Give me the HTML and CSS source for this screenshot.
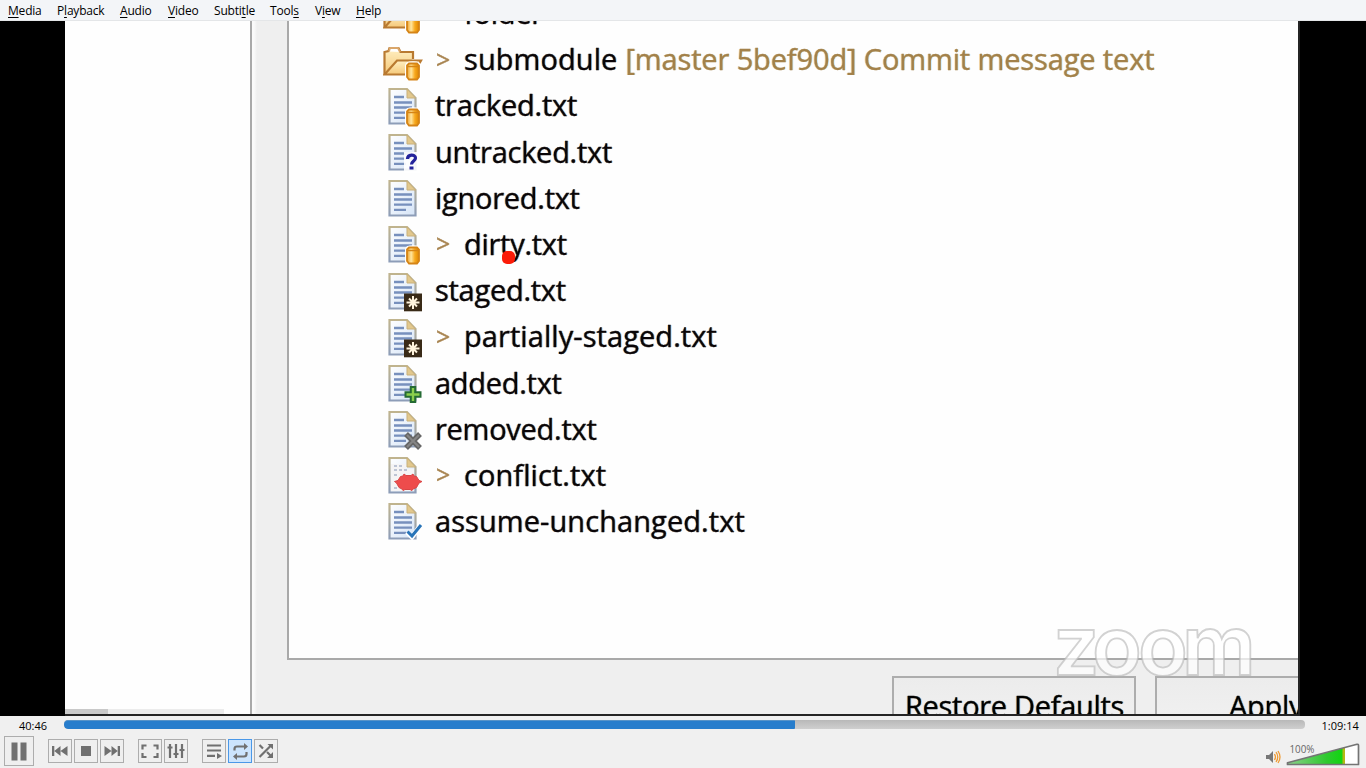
FILE: index.html
```html
<!DOCTYPE html>
<html lang="en">
<head>
<meta charset="utf-8">
<title>Media player</title>
<link rel="stylesheet" href="styles.css">
</head>
<body>
<svg class="defs" width="0" height="0">
  <defs>
    <linearGradient id="paper" x1="0" y1="0" x2="1" y2="1"><stop offset="0" stop-color="#fff"/><stop offset="1" stop-color="#d5e4f7"/></linearGradient>
    <linearGradient id="edge" x1="0" y1="0" x2="0" y2="1"><stop offset="0" stop-color="#c0b48e"/><stop offset="1" stop-color="#8d9db8"/></linearGradient>
    <linearGradient id="gold"><stop offset="0" stop-color="#eda02c"/><stop offset=".35" stop-color="#ffe6a0"/><stop offset=".65" stop-color="#f8aa20"/><stop offset="1" stop-color="#dc8500"/></linearGradient>
    <linearGradient id="fold" x1="0" y1="0" x2="0" y2="1"><stop offset="0" stop-color="#fff0c4"/><stop offset="1" stop-color="#f5c878"/></linearGradient>
    <linearGradient id="vol"><stop offset="0" stop-color="#8bcf8b"/><stop offset=".55" stop-color="#2fc92f"/><stop offset=".76" stop-color="#12d412"/><stop offset=".79" stop-color="#b5b814"/><stop offset=".81" stop-color="#b5b814"/><stop offset=".81" stop-color="#fff"/></linearGradient>
    <g id="doc">
      <path d="M6.5 6H24l8.500 9v25.500H6.500z" fill="url(#paper)" stroke="url(#edge)" stroke-width="2.200"/>
      <path d="M24 6v9h8.500z" fill="#e2c88d" stroke="#c9b07a"/>
      <path d="M11 14h10M11 19.500h18M11 24.500h18M11 29.700h18M11 34.800h12" stroke="#7790bd" stroke-width="2.300"/>
    </g>
    <g id="cyl">
      <path d="M24 28.500c0-3 12-3 12 0V40.500c0 3-12 3-12 0z" fill="#fff" stroke="#fff" stroke-width="4"/>
      <path d="M24 28.500l2-2h8l2 2v11.500l-2 2.500h-8l-2-2.500z" fill="url(#gold)" stroke="#d58416" stroke-width="1.800"/>
      <path d="M24.500 29.500h11" fill="none" stroke="#d58416" stroke-width="1.500"/>
    </g>
    <g id="folder">
      <path d="M1.500 37V15l4-1 1-3h9l2 4H30v7" fill="url(#fold)" stroke="#b97a31" stroke-width="2.200"/>
      <path d="M6 14.500l1-3.500h8l2 4" fill="#fff" stroke="#d9a66b" stroke-width="1.800"/>
      <path d="M1.500 37.500L14 23.500h24L30 37.500z" fill="url(#fold)" stroke="#b97a31" stroke-width="2.200"/>
    </g>
    <g id="star">
      <path d="M21 25.500h18v17.800H21z" fill="#392a17"/>
      <path d="M30 28v13M23.500 34.500h13M26 30.500l8 8M34 30.500l-8 8" stroke="#fff4dd" stroke-width="2"/>
    </g>
  </defs>
</svg>

<nav class="menubar">
  <span class="m1"><u>M</u>edia</span><span class="m2">P<u>l</u>ayback</span><span class="m3"><u>A</u>udio</span><span class="m4"><u>V</u>ideo</span><span class="m5">Subti<u>t</u>le</span><span class="m6">Tool<u>s</u></span><span class="m7">V<u>i</u>ew</span><span class="m8"><u>H</u>elp</span>
</nav>

<main class="stage">
  <div class="video">
    <aside class="side"><div class="hscroll"><i></i></div></aside>
    <section class="dialog">
      <div class="tree">
        <div class="row"><svg class="ic"><use href="#folder"/><use href="#cyl"/></svg><span class="t l2 folder">folder</span></div>
        <div class="row"><svg class="ic"><use href="#folder"/><use href="#cyl"/></svg><span class="gt">&gt;</span><span class="t l2 wide">submodule</span><span class="t deco">[master 5bef90d] Commit message text</span></div>
        <div class="row"><svg class="ic"><use href="#doc"/><use href="#cyl"/></svg><span class="t">tracked.txt</span></div>
        <div class="row"><svg class="ic"><use href="#doc"/><path d="M21 23h16v21H21z" fill="#fff" opacity=".9"/><path d="M24.500 30c0-5 8-5 8-1 0 3-4 3-4 6.500M26.500 39h4" fill="none" stroke="#23239b" stroke-width="3.200"/></svg><span class="t">untracked.txt</span></div>
        <div class="row"><svg class="ic"><use href="#doc"/></svg><span class="t">ignored.txt</span></div>
        <div class="row"><svg class="ic"><use href="#doc"/><use href="#cyl"/></svg><span class="gt">&gt;</span><span class="t l2">dirty.txt</span><i class="pointer"></i></div>
        <div class="row"><svg class="ic"><use href="#doc"/><use href="#star"/></svg><span class="t">staged.txt</span></div>
        <div class="row"><svg class="ic"><use href="#doc"/><use href="#star"/></svg><span class="gt">&gt;</span><span class="t l2 wide">partially-staged.txt</span></div>
        <div class="row"><svg class="ic"><use href="#doc"/><path d="M30 26v17M21.500 34.500h17" stroke="#256b34" stroke-width="6.500"/><path d="M30 28v13M23.500 34.500h13" stroke="#8bd04d" stroke-width="2.400"/></svg><span class="t">added.txt</span></div>
        <div class="row"><svg class="ic"><use href="#doc"/><path d="M23 28l14 14M37 28L23 42" stroke="#666" stroke-width="5.500"/><path d="M24 29l12 12M36 29L24 41" stroke="#858585" stroke-width="2"/></svg><span class="t">removed.txt</span></div>
        <div class="row"><svg class="ic"><use href="#doc"/><path d="M8 12h15v5h8v22H8z" fill="#f5f4f5"/><path d="M11 14h10M11 18h14M11 23h4M11 36h5" stroke="#aab4c9" stroke-width="1.700" stroke-dasharray="3 2"/><path d="M11.500 29.500l3.500-1 2.500-4 2.500-.5 1-2 2 1.500h5l2-1.500 1 2 2.500.5 2.500 4 3 1-3 1.500-2.500 4.500-3.500 1.500-1 1.500-2-1h-5l-2 1-1-1.500-3-1.500-2.500-4.500z" fill="#ee4c4c" stroke="#d94444"/></svg><span class="gt">&gt;</span><span class="t l2 wide">conflict.txt</span></div>
        <div class="row"><svg class="ic"><use href="#doc"/><path d="M24 34l5 5 9-12" fill="none" stroke="#fff" stroke-width="5"/><path d="M24.500 33.500l4.500 4.500L38 27" fill="none" stroke="#2874b8" stroke-width="3"/></svg><span class="t wide">assume-unchanged.txt</span></div>
      </div>
      <div class="buttons"><div class="btn b1"><span>Restore Defaults</span></div><div class="btn b2"><span>Apply</span></div></div>
    </section>
    <svg class="mark" width="210" height="64"><text x="4 43 89 133" y="54">zoom</text></svg>
  </div>
</main>

<footer class="controls">
  <div class="seek"><span class="now">40:46</span><div class="bar"><i></i></div><span class="total">1:09:14</span></div>
  <div class="tools">
    <div class="cb big"><svg width="28" height="28"><path d="M6.500 5.500h6v18h-6zM15.500 5.500h6v18h-6z"/></svg></div>
    <div class="group">
      <div class="cb"><svg width="22" height="22"><path d="M3 6h2.300v10H3zM11.500 6v10L5.300 11zM18.500 6v10L11.500 11z"/></svg></div>
      <div class="cb"><svg width="22" height="22"><path d="M6 6h10v10H6z"/></svg></div>
      <div class="cb"><svg width="22" height="22"><path d="M16.700 6H19v10h-2.300zM10.500 6v10l6.200-5zM3.500 6v10l7-5z"/></svg></div>
    </div>
    <div class="group g2">
      <div class="cb"><svg width="22" height="22"><path class="ln" d="M7.500 5.500h-4v4M14.500 5.500h4v4M3.500 13v4h4M18.500 13v4h-4"/></svg></div>
      <div class="cb"><svg width="22" height="22"><path class="ln" d="M5 4v14M11 4v14M17 4v14M2.500 7.500h5M8.500 14h5M14.500 10h5"/></svg></div>
    </div>
    <div class="group g3">
      <div class="cb"><svg width="22" height="22"><path class="ln" d="M4 5.500h14M4 10.500h14M4 15.800h8"/><path d="M14 13l5 3-5 3z"/></svg></div>
      <div class="cb on"><svg width="22" height="22"><path class="ln" d="M5.500 10.500V9Q5.500 6.500 8 6.500h8M17.500 12v2q0 2.500-2.500 2.500H7"/><path d="M15 3l4 3.500-4 3.500zM8 13l-4 3.500L8 20z"/></svg></div>
      <div class="cb"><svg width="22" height="22"><path class="ln" d="M4.500 5l3.500 3.500M4.500 17L16 5.500M12 12l4.500 4.500"/><path d="M12.500 4H18v5.500zM18 12v6h-6z"/></svg></div>
    </div>
    <svg class="volume" width="98" height="28">
      <path d="M3 17h3l4-4v12l-4-4H3z" fill="#777"/>
      <path d="M11.500 16q2 3 0 6M13 14q3.500 5 0 10M15 13q4 6 0 12" fill="none" stroke="#f09a32" stroke-width="1.300"/>
      <path d="M24.500 26.500v-1.700L94 6.300q1.500-.3 1.500 1.200v19z" fill="url(#vol)" stroke="#747474" stroke-width="1.700" stroke-linejoin="round"/>
      <text x="26.500" y="14.500" textLength="25" lengthAdjust="spacingAndGlyphs">100%</text>
    </svg>
  </div>
</footer>
</body>
</html>
```
FILE: styles.css
```css
* { box-sizing: border-box; }
body { margin: 0; width: 1366px; height: 768px; overflow: hidden; display: flex; flex-direction: column; background: #f0f0f0; font-family: "Open Sans", "Noto Sans", sans-serif; color: #000; }
.defs { position: absolute; }
.menubar { height: 21px; flex: none; display: flex; gap: 16px; padding: 2px 0 0 8px; background: #f3f5f8; border-bottom: 1px solid #e4e6e8; font-size: 12px; line-height: 17px; letter-spacing: -.2px; white-space: nowrap; }
.menubar u { text-underline-offset: 2px; text-decoration-thickness: 1px; text-decoration-skip-ink: none; }
.m1 { width: 33px; } .m2 { width: 47px; } .m3 { width: 32px; } .m4 { width: 30px; }
.m5 { width: 40px; } .m6 { width: 29px; } .m7 { width: 25px; } .m8 { width: 25px; }

.stage { height: 695px; flex: none; background: #000; padding-left: 65px; }
.video { position: relative; width: 1235px; height: 695px; display: flex; background: #efefef; border: solid #242424; border-width: 0 2px 2px 0; overflow: hidden; }
.side { width: 187px; flex: none; background: #fefefe; border-right: 2px solid #a9a9a9; display: flex; align-items: flex-end; }
.hscroll { width: 159px; height: 5px; background: #ececec; }
.hscroll i { display: block; width: 43px; height: 5px; background: #c9c9c9; }
.dialog { flex: 1; min-width: 0; padding-left: 34.500px; background: linear-gradient(90deg, #fafafa 0, #fafafa 2px, #efefef 5px); }
.tree { height: 639px; background: #fefefe; border: solid #a9a9a9; border-width: 0 0 2px 2px; padding-left: 94.500px; overflow: hidden; }
.row { position: relative; height: 46.2px; display: flex; align-items: center; white-space: nowrap; }
.row:first-child { margin-top: -30.600px; }
.ic { width: 40px; height: 46.200px; flex: none; filter: blur(.6px); }
.t { margin: -1px 0 0 12px; font-size: 29px; line-height: 46px; color: #0a0508; letter-spacing: -.27px; -webkit-text-stroke: .3px currentColor; text-shadow: -1px 0 rgba(255,170,60,.5), 1px 0 rgba(60,170,255,.5); filter: blur(.4px); }
.wide { letter-spacing: .07px; }
.gt { width: 28px; margin: -2px 0 0 13px; font-size: 25px; color: #a88450; -webkit-text-stroke: .4px #a88450; filter: blur(.4px); }
.gt + .l2 { margin-left: 0; }
.folder { margin-left: 41px; margin-top: -2px; }
.deco { margin-left: 8px; letter-spacing: -.13px; color: #a3814a; text-shadow: -1px 0 rgba(255,190,80,.4), 1px 0 rgba(110,200,255,.35); }
.pointer { position: absolute; left: 119px; top: 30px; width: 13px; height: 13px; border-radius: 5px; background: #fb1b08; }
.buttons { display: flex; gap: 19px; padding: 16px 0 0 605.500px; }
.btn { flex: none; width: 244px; height: 60px; border: 2px solid #adadad; background: linear-gradient(#ececec, #f2f2f2); padding: 8px 0 0 11px; font-size: 29px; line-height: 40px; letter-spacing: -.3px; white-space: nowrap; -webkit-text-stroke: .3px #000; text-shadow: -1px 0 rgba(255,170,60,.5), 1px 0 rgba(60,170,255,.5); }
.btn span { filter: blur(.4px); }
.b2 { padding-left: 72px; }
.mark { position: absolute; left: 984px; top: 600px; }
.mark text { font-family: Inter, sans-serif; font-size: 82px; font-weight: 600; fill: rgba(255,255,255,.7); stroke: rgba(180,180,180,.6); stroke-width: 1.800px; }

.controls { flex: 1; background: #f0f0f0; }
.seek { height: 19px; display: flex; align-items: flex-start; font-size: 11px; line-height: 20px; }
.now { width: 64px; padding-left: 19px; }
.bar { width: 1241px; height: 9px; margin-top: 4px; border-radius: 4px; background: linear-gradient(#b8b8b8, #cfcfcf); overflow: hidden; }
.bar i { display: block; width: 731px; height: 9px; background: #277dcc; border-top: 1px solid #5793c8; border-radius: 4px 1px 1px 4px; }
.total { padding-left: 16.500px; }
.tools { display: flex; align-items: center; padding-left: 4px; height: 32px; }
.group { display: flex; gap: 2px; margin-left: 14px; }
.cb { width: 24px; height: 24px; border: 1px solid #adadad; background: #efefef; }
.cb svg { display: block; fill: #707070; }
.ln { fill: none; stroke: #707070; stroke-width: 2.200px; }
.big { width: 30px; height: 30px; }
.on { background: #cce4fd; border-color: #4a98e8; }
.volume { margin: 2px 5px 0 auto; }
.volume text { font-size: 10px; fill: #666; }
```
